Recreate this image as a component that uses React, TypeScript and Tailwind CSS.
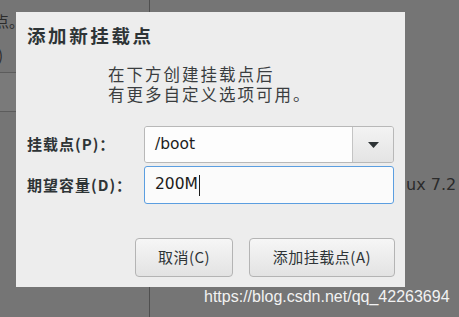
import React from "react";

const CJK = { fontFamily: '"Noto Sans CJK SC", "Noto Sans", sans-serif' };
const LAT = { fontFamily: '"DejaVu Sans", "Noto Sans CJK SC", sans-serif' };

export default function App() {
  return (
    <div className="relative w-[459px] h-[317px] bg-[#757575] overflow-hidden" style={CJK}>
      {/* background window remnants */}
      <div className="absolute left-0 top-[72px] w-[16px] h-[40px] bg-[#7a7a7a] border-t border-b border-[#5c5c5c]" />
      <div className="absolute left-[-6px] top-[12px] text-[15px] leading-[18px] text-[#2b2b2b]">点。</div>
      <div className="absolute left-[-2px] top-[46px] text-[15px] leading-[18px] text-[#2b2b2b]">)</div>
      <div className="absolute left-[149px] top-0 w-px h-[12px] bg-[#4f4f4f]" />
      <div className="absolute left-[149px] top-[287px] w-px h-[30px] bg-[#4f4f4f]" />
      <div className="absolute left-[406px] top-[176px] text-[16px] leading-[18px] text-[#2b2b2b] whitespace-nowrap" style={LAT}>
        ux 7.2 安
      </div>
      <div
        className="absolute left-[204px] top-[288px] text-[16px] leading-[18px] text-[#f2f2f2] whitespace-nowrap"
        style={{ fontFamily: '"Liberation Sans", Arial, sans-serif' }}
      >
        https://blog.csdn.net/qq_42263694
      </div>

      {/* dialog */}
      <div className="absolute left-[16px] top-[12px] w-[389px] h-[275px] bg-[#ededed] flex flex-col text-[#2e3436]">
        <div className="pl-[11px] pt-[12px] text-[18.5px] leading-[22px] font-bold tracking-[2.6px]">添加新挂载点</div>
        <div className="pl-[92px] pt-[18px] text-[16.5px] leading-[20px] tracking-[2px] text-[#3a3d3f]">
          <div>在下方创建挂载点后</div>
          <div>有更多自定义选项可用。</div>
        </div>
        <div className="pl-[11px] pt-[22px] grid grid-cols-[117px_250px] gap-y-[3px] items-center">
          <div className="text-[15px] font-bold tracking-[1px] text-[#2e3436]">挂载点(P)：</div>
          <div className="h-[37px] flex rounded-[3px] border border-[#b8b8b8] overflow-hidden">
            <div className="flex-1 bg-[#fdfdfd] flex items-center pl-[10px] text-[15.5px] text-[#1c1c1c]" style={LAT}>
              /boot
            </div>
            <div className="w-[41px] border-l border-[#c4c4c4] bg-gradient-to-b from-[#f3f3f3] to-[#e4e4e4] flex items-center justify-center">
              <svg width="11" height="6" viewBox="0 0 11 6">
                <path d="M0 0 L11 0 L5.5 6 Z" fill="#2e3436" />
              </svg>
            </div>
          </div>
          <div className="text-[15px] font-bold tracking-[1px] text-[#2e3436]">期望容量(D)：</div>
          <div className="h-[38px] rounded-[3px] border border-[#5b9ee0] bg-[#fbfbfb] flex items-center pl-[10px] text-[15.5px] text-[#1c1c1c]" style={LAT}>
            <span>200M</span>
            <span className="w-px h-[21px] bg-[#1c1c1c] ml-px" />
          </div>
        </div>
        <div className="flex justify-end gap-[16px] pr-[10px] pt-[34px]">
          <button className="w-[98px] h-[39px] rounded-[4px] border border-[#b4b4b4] bg-gradient-to-b from-[#f6f6f6] to-[#e3e3e3] text-[15px] text-[#2e3436] tracking-[0.5px]">
            取消(C)
          </button>
          <button className="w-[146px] h-[39px] rounded-[4px] border border-[#b4b4b4] bg-gradient-to-b from-[#f6f6f6] to-[#e3e3e3] text-[15px] text-[#2e3436] tracking-[0.5px]">
            添加挂载点(A)
          </button>
        </div>
      </div>
    </div>
  );
}
